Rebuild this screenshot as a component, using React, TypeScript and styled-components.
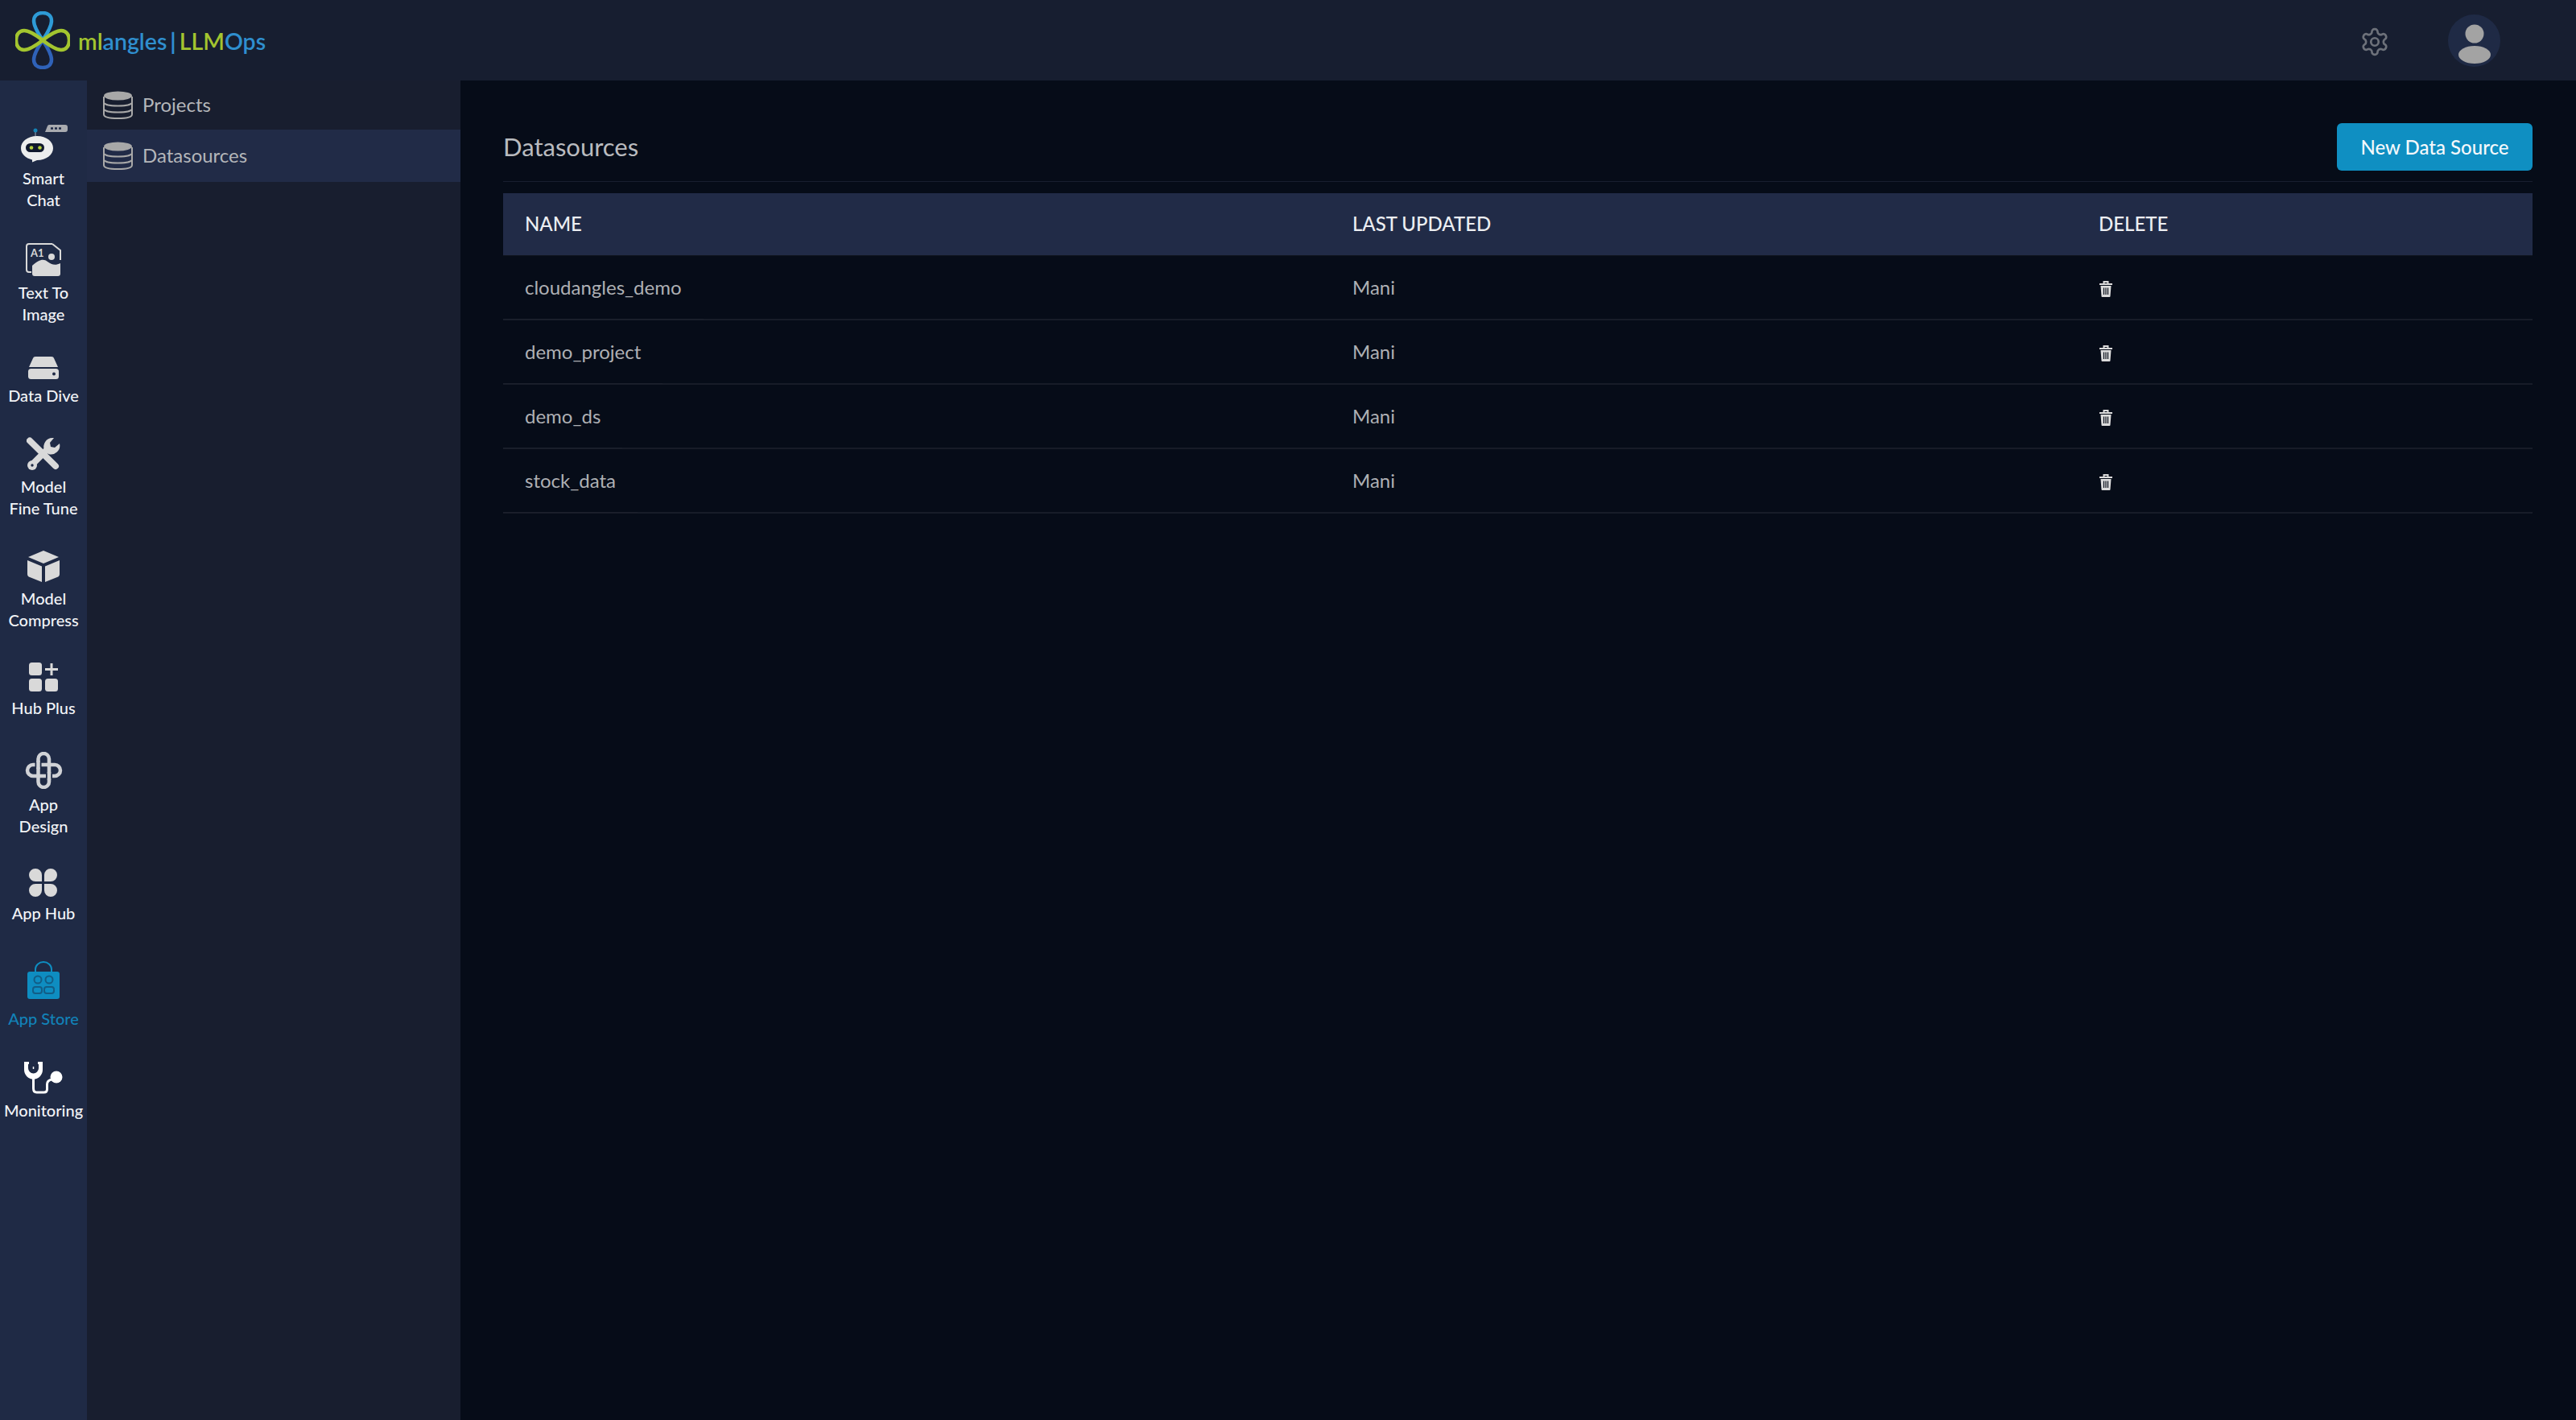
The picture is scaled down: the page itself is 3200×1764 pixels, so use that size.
import React from "react";
import styled, { createGlobalStyle } from "styled-components";

const Global = createGlobalStyle`
  html, body { margin: 0; padding: 0; background: #060c18; }
  * { box-sizing: border-box; }
  body { font-family: Lato, "Noto Sans", sans-serif; }
`;

const Page = styled.div`
  display: flex; flex-direction: column; width: 3200px; height: 1764px; overflow: hidden;
`;
const Topbar = styled.header`
  height: 100px; flex: none; background: #171e30; display: flex; align-items: center; padding: 0 94px 0 19px;
`;
const Logo = styled.div`
  display: flex; align-items: center; gap: 10px;
`;
const LogoText = styled.span`
  font-weight: 600; font-size: 28.5px; color: #2f8fcf; white-space: pre; padding-top: 2px;
`;
const Green = styled.span`color: #a3c52f;`;
const LogoBar = styled.span`margin: 0 4px; font-weight: 700;`;
const TopActions = styled.div`
  margin-left: auto; display: flex; align-items: center; gap: 72px;
`;
const Gear = styled.svg`margin-top: 4px;`;
const Avatar = styled.div`
  width: 65px; height: 65px; border-radius: 50%; background: #1f2a45; overflow: hidden;
`;
const Body = styled.div`
  flex: 1; display: flex; min-height: 0;
`;
const Rail = styled.nav`
  width: 108px; flex: none; background: #1f2a45; padding-top: 16px; display: flex; flex-direction: column; align-items: center;
`;
const RailItem = styled.div<{ $top: number; $active?: boolean }>`
  margin-top: ${p => p.$top}px; display: flex; flex-direction: column; align-items: center; gap: ${p => (p.$active ? 10 : 6)}px;
  color: ${p => (p.$active ? "#1282b8" : "#f2f4f7")};
`;
const RailLabel = styled.div`
  font-size: 20px; line-height: 27px; text-align: center; white-space: pre-line; font-weight: 500; width: 108px;
`;
const SubNav = styled.aside`
  width: 464px; flex: none; background: #181e2f;
`;
const SubItem = styled.div<{ $active?: boolean; $h: number }>`
  height: ${p => p.$h}px; display: flex; align-items: center; gap: 12px; padding-left: 20px;
  background: ${p => (p.$active ? "#212b47" : "transparent")};
  color: #b4b6ba; font-size: 24px;
`;
const SubLabel = styled.span`padding-bottom: 3px;`;
const Main = styled.main`
  flex: 1; background: #060c18; padding: 53px 54px 0 53px; min-width: 0;
`;
const Head = styled.div`
  display: flex; align-items: center; justify-content: space-between; padding-bottom: 13px; border-bottom: 1px solid #181f30;
`;
const Title = styled.h1`
  margin: 0; padding-bottom: 2px; font-size: 31px; font-weight: 400; color: #b9bbbf;
`;
const NewButton = styled.button`
  height: 59px; width: 243px; border: 0; border-radius: 6px; background: #0f8fc2; color: #f4f8fb;
  font: 500 24px Lato, sans-serif;
`;
const Table = styled.table`
  width: 100%; margin-top: 14px; border-collapse: collapse; table-layout: fixed;
`;
const Th = styled.th<{ $w?: number }>`
  height: 77px; background: #212b47; color: #eceef2; font-size: 24px; font-weight: 500; text-align: left; padding: 0 0 2px 27px;
  ${p => (p.$w ? `width: ${p.$w}px;` : "")} border-bottom: 1px solid #10151f;
`;
const Td = styled.td`
  height: 80px; color: #aeb0b4; font-size: 24px; line-height: 30px; padding: 0 0 0 27px; border-bottom: 2px solid #171c28;
`;
const NameBox = styled.span`
  display: inline-block; position: relative;
  &::after {
    content: ""; position: absolute; left: -27px; right: -27px; top: 54px; height: 1px; background: #1c212d;
  }
`;
const Db = styled.svg` display: block; flex: none; `;
const TrashSlot = styled.div`padding-top: 4px;`;

const Database = () => (
  <Db width="37" height="35" viewBox="0 0 37 35">
    <ellipse cx="18.500" cy="6" rx="17.500" ry="5.500" fill="#a8a8a8" />
    <path d="M1 7v22c0 3.500 8 5 17.500 5S36 32.500 36 29V7" fill="none" stroke="#a8a8a8" strokeWidth="2" />
    <path d="M1 14c0 3 8 4.500 17.500 4.500S36 17 36 14M1 22c0 3 8 4.500 17.500 4.500S36 25 36 22" fill="none" stroke="#a8a8a8" strokeWidth="2" />
  </Db>
);

const Ico: React.FC<{ x: number; y: number; w: number; h: number; children: React.ReactNode }> = ({ x, y, w, h, children }) => (
  <Db width={w} height={h} viewBox={`${x} ${y} ${w} ${h}`}>{children}</Db>
);

const G = "#d9d9d9";
const icons: Record<string, React.ReactNode> = {
  robot: (
    <Ico x={24} y={154} w={62} h={47}>
      <path d="M57 163l3-7.500q.5-1.500 2-1.500h20q3 0 3 3v3q0 3-3 3z" fill="#a9abb0" />
      <path d="M64 158.500h15" stroke="#1f2a45" strokeWidth="2.500" strokeDasharray="3 2" />
      <path d="M45 162v7" stroke="#5f6b80" strokeWidth="2" />
      <circle cx="45" cy="161" r="2.500" fill="#1483b5" />
      <path d="M47 168c12 0 20 7 20 15s-8 15-20 15l-6 2.500v-3c-8-2-14-7-14-14.500 0-8 8-15 20-15z" fill="#eceded" />
      <rect x="33" y="177" width="23" height="11" rx="5.500" fill="#10182d" />
      <circle cx="40" cy="182.500" r="2.300" fill="#b4cf3c" />
      <circle cx="50.500" cy="182.500" r="2.300" fill="#b4cf3c" />
    </Ico>
  ),
  image: (
    <Ico x={33} y={301} w={44} h={43}>
      <path d="M66 303H37q-3 0-3 3v29q0 3 3 3h3" fill="none" stroke="#d9d9d9" strokeWidth="2" />
      <path d="M66 303l10 8v12" fill="none" stroke="#d9d9d9" strokeWidth="2" />
      <text x="39" y="319" fill="#d9d9d9" fontFamily="Lato, sans-serif" fontWeight="700" fontSize="13">A1</text>
      <circle cx="65" cy="319" r="4" fill="#d9d9d9" />
      <path d="M41 330c9-8 14-9 19-5 5 4 10 5 16 2v13q0 3-3 3H44q-3 0-3-3z" fill="#d9d9d9" />
    </Ico>
  ),
  hdd: (
    <Ico x={34} y={444} w={40} h={30}>
      <path d="M41 447q.5-2 3-2h20q2.500 0 3 2l5 11H36z" fill={G} />
      <rect x="35" y="460" width="38" height="13" rx="3.500" fill={G} />
      <circle cx="67" cy="466.500" r="2" fill="#1f2a45" />
    </Ico>
  ),
  tools: (
    <Ico x={34} y={545} w={42} h={42}>
      <path d="M38 549.500L70 581" stroke={G} strokeWidth="8" strokeLinecap="round" />
      <path d="M62 558L40 580" stroke={G} strokeWidth="8" />
      <circle cx="41" cy="580" r="6" fill={G} />
      <circle cx="41" cy="580" r="1.700" fill="#1f2a45" />
      <path d="M66 546a11 11 0 0 0-10 15l5 5a11 11 0 0 0 14-13l-6 5-5-1-1-5 5-6z" fill={G} />
    </Ico>
  ),
  cube: (
    <Ico x={33} y={685} w={42} h={41}>
      <path d="M54 686l19 8-19 8-19-8z" fill={G} />
      <path d="M34 698l18 7.500V725l-15-6q-3-1-3-4z" fill={G} />
      <path d="M74 698l-18 7.500V725l15-6q3-1 3-4z" fill={G} />
    </Ico>
  ),
  hub: (
    <Ico x={36} y={825} w={37} h={37}>
      <rect x="36" y="825" width="16" height="16" rx="3.500" fill={G} />
      <rect x="36" y="845" width="16" height="16" rx="3.500" fill={G} />
      <rect x="56" y="845" width="16" height="16" rx="3.500" fill={G} />
      <path d="M56 833.500h16M64 826v15" stroke={G} strokeWidth="3" />
    </Ico>
  ),
  design: (
    <Ico x={31} y={934} w={47} h={46}>
      <rect x="47.500" y="936" width="13.500" height="42" rx="6.750" fill="none" stroke="#d0d2d6" strokeWidth="4.500" />
      <rect x="34" y="950" width="41" height="14" rx="7" fill="none" stroke="#d0d2d6" strokeWidth="4.500" />
      <path d="M47.500 946.500v7M61 960.500v7" stroke="#1f2a45" strokeWidth="8" />
      <path d="M47.500 945v10M61 959v10" stroke="#d0d2d6" strokeWidth="4.500" />
    </Ico>
  ),
  apphub: (
    <Ico x={37} y={1080} w={36} h={37}>
      <path d="M45 1081a8 8 0 0 1 8 8v8h-8a8 8 0 0 1 0-16zM64 1081a8 8 0 0 1 0 16h-8v-8a8 8 0 0 1 8-8zM45 1116a8 8 0 0 1 0-16h8v8a8 8 0 0 1-8 8zM64 1116a8 8 0 0 0 0-16h-8v8a8 8 0 0 0 8 8z" fill={G} />
    </Ico>
  ),
  store: (
    <Ico x={34} y={1194} w={41} h={48}>
      <path d="M44 1208v-4a10 9 0 0 1 20 0v4" fill="none" stroke="#0e8dc1" strokeWidth="2" />
      <rect x="34" y="1207" width="40" height="34" rx="3" fill="#0e8dc1" />
      <circle cx="47" cy="1217" r="4.500" fill="none" stroke="#125d86" strokeWidth="2" />
      <circle cx="61" cy="1217" r="4.500" fill="none" stroke="#125d86" strokeWidth="2" />
      <rect x="41" y="1226" width="11" height="8" rx="3" fill="none" stroke="#125d86" strokeWidth="2" />
      <rect x="55" y="1226" width="12" height="8" rx="3" fill="none" stroke="#125d86" strokeWidth="2" />
    </Ico>
  ),
  steth: (
    <Ico x={29} y={1318} w={50} h={42}>
      <path d="M30 1319h6v3h-1v5a6.500 6.500 0 0 0 13 0v-5h-1v-3h6v10a11.500 11.500 0 0 1-23 0z" fill="#fff" />
      <path d="M41.500 1325v3" stroke="#fff" strokeWidth="1.500" />
      <path d="M41.500 1340v12q0 5 4 5h9q4 0 4-4v-6q0-5 6-6" fill="none" stroke="#fff" strokeWidth="3" />
      <circle cx="70" cy="1338" r="7.500" fill="#fff" />
    </Ico>
  ),
};

const nav = [
  { icon: "robot", label: "Smart\nChat", top: 39 },
  { icon: "image", label: "Text To\nImage", top: 39 },
  { icon: "hdd", label: "Data Dive", top: 38 },
  { icon: "tools", label: "Model\nFine Tune", top: 38 },
  { icon: "cube", label: "Model\nCompress", top: 38 },
  { icon: "hub", label: "Hub Plus", top: 39 },
  { icon: "design", label: "App\nDesign", top: 41 },
  { icon: "apphub", label: "App Hub", top: 38 },
  { icon: "store", label: "App Store", top: 46, active: true },
  { icon: "steth", label: "Monitoring", top: 39 },
];

const rows = ["cloudangles_demo", "demo_project", "demo_ds", "stock_data"];

const Clover = () => (
  <Db width="68" height="72" viewBox="-1 -1 68 72">
    <path d="M33 35C27 26 22 18 22 11 22 4 27 1 33 1" fill="none" stroke="#2e9bd6" strokeWidth="4.500" />
    <path d="M33 1c6 0 11 3 11 10 0 7-5 15-11 24" fill="none" stroke="#2e9bd6" strokeWidth="4.500" />
    <path d="M33 35C27 44 22 52 22 59c0 7 5 10 11 10s11-3 11-10c0-7-5-15-11-24" fill="none" stroke="#2f62b8" strokeWidth="4.500" />
    <path d="M33 35C24 28 16 23 10 23 3 23 0 29 0 35s3 12 10 12c6 0 14-5 23-12s17-12 23-12c7 0 10 6 10 12s-3 12-10 12c-6 0-14-5-23-12" fill="none" stroke="#a3c52f" strokeWidth="4.500" />
  </Db>
);

const Trash = () => (
  <Db width="18" height="20" viewBox="0 0 18 20">
    <path d="M1 4h16M6.500 3V1h5v2" stroke="#dcdcdc" strokeWidth="2" fill="none" />
    <path d="M2.500 6h13l-1 13q0 1-1 1h-9q-1 0-1-1z" fill="#dcdcdc" />
    <path d="M6.500 8.500v8.500M9 8.500v8.500M11.500 8.500v8.500" stroke="#060c18" strokeWidth="1.200" />
  </Db>
);

export default function App() {
  return (
    <Page>
      <Global />
      <Topbar>
        <Logo>
          <Clover />
          <LogoText><Green>ml</Green>angles<LogoBar>|</LogoBar><Green>LLM</Green>Ops</LogoText>
        </Logo>
        <TopActions>
          <Gear width="38" height="38" viewBox="0 0 24 24" fill="none" stroke="#6d717a" strokeWidth="1.700" strokeLinecap="round" strokeLinejoin="round">
            <path d="M12.220 2h-.44a2 2 0 0 0-2 2v.180a2 2 0 0 1-1 1.730l-.430.250a2 2 0 0 1-2 0l-.150-.080a2 2 0 0 0-2.730.730l-.220.380a2 2 0 0 0 .730 2.730l.150.100a2 2 0 0 1 1 1.720v.510a2 2 0 0 1-1 1.740l-.150.090a2 2 0 0 0-.730 2.730l.220.380a2 2 0 0 0 2.730.730l.150-.080a2 2 0 0 1 2 0l.430.250a2 2 0 0 1 1 1.730V20a2 2 0 0 0 2 2h.440a2 2 0 0 0 2-2v-.180a2 2 0 0 1 1-1.730l.430-.250a2 2 0 0 1 2 0l.150.080a2 2 0 0 0 2.730-.730l.220-.390a2 2 0 0 0-.730-2.730l-.150-.080a2 2 0 0 1-1-1.740v-.500a2 2 0 0 1 1-1.740l.150-.090a2 2 0 0 0 .730-2.730l-.220-.380a2 2 0 0 0-2.730-.730l-.150.080a2 2 0 0 1-2 0l-.430-.250a2 2 0 0 1-1-1.730V4a2 2 0 0 0-2-2z" />
            <circle cx="12" cy="12" r="3" />
          </Gear>
          <Avatar>
            <svg width="65" height="65" viewBox="0 0 65 65">
              <circle cx="33" cy="24" r="11.500" fill="#a3a3a3" />
              <ellipse cx="33" cy="50" rx="20" ry="11" fill="#a3a3a3" />
            </svg>
          </Avatar>
        </TopActions>
      </Topbar>
      <Body>
        <Rail>
          {nav.map(n => (
            <RailItem key={n.label} $top={n.top} $active={n.active}>
              {icons[n.icon]}
              <RailLabel>{n.label}</RailLabel>
            </RailItem>
          ))}
        </Rail>
        <SubNav>
          <SubItem $h={61}><Database /><SubLabel>Projects</SubLabel></SubItem>
          <SubItem $h={65} $active><Database /><SubLabel>Datasources</SubLabel></SubItem>
        </SubNav>
        <Main>
          <Head>
            <Title>Datasources</Title>
            <NewButton>New Data Source</NewButton>
          </Head>
          <Table>
            <thead>
              <tr>
                <Th $w={1028}>NAME</Th>
                <Th $w={927}>LAST UPDATED</Th>
                <Th>DELETE</Th>
              </tr>
            </thead>
            <tbody>
              {rows.map(r => (
                <tr key={r}>
                  <Td><NameBox>{r}</NameBox></Td>
                  <Td>Mani</Td>
                  <Td><TrashSlot><Trash /></TrashSlot></Td>
                </tr>
              ))}
            </tbody>
          </Table>
        </Main>
      </Body>
    </Page>
  );
}
